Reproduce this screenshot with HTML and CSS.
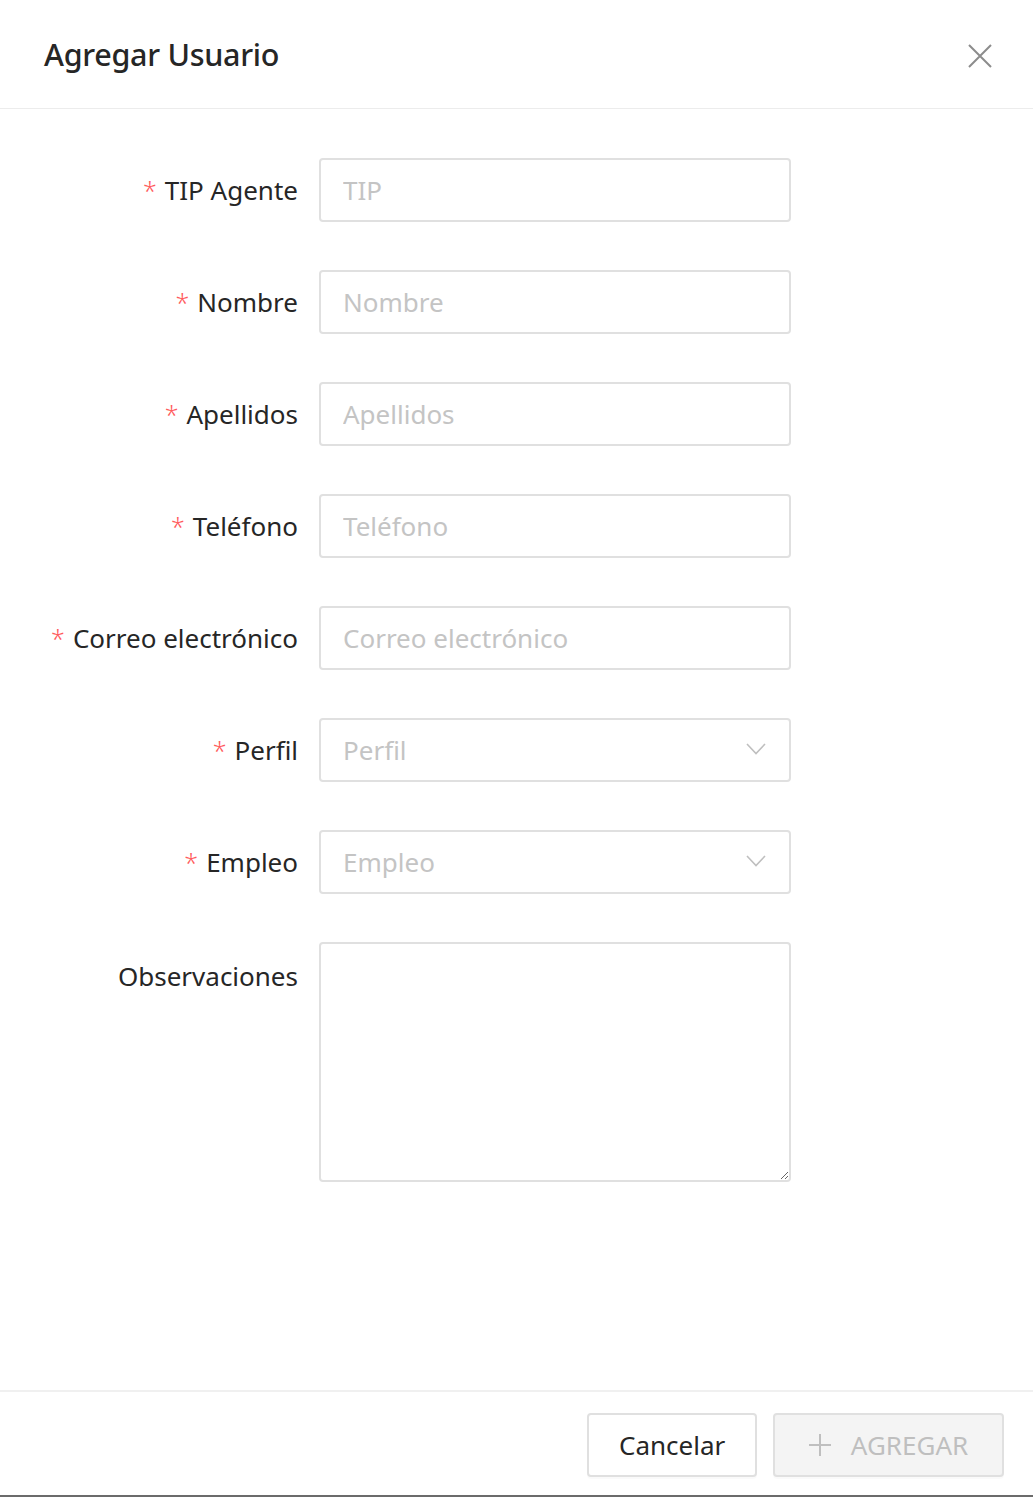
FILE: index.html
```html
<!DOCTYPE html>
<html lang="es">
<head>
<meta charset="utf-8">
<title>Agregar Usuario</title>
<link rel="stylesheet" href="styles.css">
</head>
<body>
<div class="modal">
  <header class="modal-header">
    <h1 class="modal-title">Agregar Usuario</h1>
    <button class="close" aria-label="Cerrar">
      <svg width="24" height="24" viewBox="0 0 24 24"><path d="M1 1L23 23M23 1L1 23" stroke="#8c8c8c" stroke-width="2" fill="none"/></svg>
    </button>
  </header>
  <main class="modal-body">
    <form class="form">
      <label class="label req">TIP Agente</label>
      <div class="control"><input class="input" placeholder="TIP"></div>
      <label class="label req">Nombre</label>
      <div class="control"><input class="input" placeholder="Nombre"></div>
      <label class="label req">Apellidos</label>
      <div class="control"><input class="input" placeholder="Apellidos"></div>
      <label class="label req">Teléfono</label>
      <div class="control"><input class="input" placeholder="Teléfono"></div>
      <label class="label req">Correo electrónico</label>
      <div class="control"><input class="input" placeholder="Correo electrónico"></div>
      <label class="label req">Perfil</label>
      <div class="control"><div class="select"><span class="ph">Perfil</span><svg class="chev" width="20" height="12" viewBox="0 0 20 12"><path d="M1 1L10 10.5L19 1" stroke="#bfbfbf" stroke-width="1.6" fill="none"/></svg></div></div>
      <label class="label req">Empleo</label>
      <div class="control"><div class="select"><span class="ph">Empleo</span><svg class="chev" width="20" height="12" viewBox="0 0 20 12"><path d="M1 1L10 10.5L19 1" stroke="#bfbfbf" stroke-width="1.6" fill="none"/></svg></div></div>
      <label class="label top">Observaciones</label>
      <div class="control"><textarea class="textarea"></textarea></div>
    </form>
  </main>
  <footer class="modal-footer">
    <button class="btn" type="button">Cancelar</button>
    <button class="btn btn-disabled" type="button"><svg class="plus" width="22" height="22" viewBox="0 0 22 22"><path d="M11 0V22M0 11H22" stroke="#bfbfbf" stroke-width="2" fill="none"/></svg>AGREGAR</button>
  </footer>
  <div class="bottom-bar"></div>
</div>
</body>
</html>
```
FILE: styles.css
```css
* { box-sizing: border-box; }
html, body { margin: 0; padding: 0; background: #fff; }
body { font-family: "Noto Sans", "Open Sans", sans-serif; color: #262626; }
.modal { height: 1497px; display: flex; flex-direction: column; }
.modal-header {
  height: 109px;
  border-bottom: 1px solid #ececec;
  display: flex;
  align-items: center;
  justify-content: space-between;
  padding: 0 41px 0 44px;
}
.modal-title { margin: 0; font-size: 30.5px; font-weight: 500; color: #262626; letter-spacing: -0.3px; }
.close { background: none; border: 0; padding: 0; width: 24px; height: 24px; display: flex; margin-top: 4px; }
.modal-body { flex: 1; padding-top: 49px; }
.form {
  display: grid;
  grid-template-columns: 298px 472px;
  column-gap: 21px;
  row-gap: 48px;
}
.label {
  font-size: 26px;
  text-align: right;
  height: 64px;
  line-height: 64px;
  color: #262626;
  white-space: nowrap;
}
.label.top { line-height: 68px; }
.label.req::before { content: "*"; color: #ff5a5c; margin-right: 8px; font-size: 25px; font-weight: 300; }
.input, .select, .textarea {
  width: 472px;
  border: 2px solid #e0e0e0;
  border-radius: 4px;
  font-family: inherit;
  background: #fff;
}
.input {
  height: 64px;
  padding: 0 22px;
  font-size: 26px;
  color: #262626;
  outline: none;
}
.input::placeholder { color: #c4c4c4; }
.select {
  height: 64px;
  padding: 0 23px 0 22px;
  display: flex;
  align-items: center;
  justify-content: space-between;
}
.ph { font-size: 26px; color: #c4c4c4; }
.chev { margin-top: -2px; }
.textarea { height: 240px; display: block; resize: vertical; outline: none; }
.modal-footer {
  border-top: 2px solid #f0f0f0;
  height: 105px;
  display: flex;
  justify-content: flex-end;
  align-items: flex-start;
  gap: 16px;
  padding: 21px 29px 0 0;
}
.btn {
  height: 64px;
  border: 2px solid #e0e0e0;
  border-radius: 4px;
  background: #fff;
  font-family: inherit;
  font-size: 26px;
  color: #262626;
  padding: 0 30px;
  box-shadow: 0 2px 0 rgba(0,0,0,0.02);
}
.btn:first-child { width: 170px; }
.btn-disabled {
  width: 231px;
  background: #f4f4f4;
  color: #bfbfbf;
  display: flex;
  align-items: center;
  justify-content: center;
  gap: 20px;
}
.plus { flex: none; }
.bottom-bar { height: 2px; background: #6b6b6b; }
```
